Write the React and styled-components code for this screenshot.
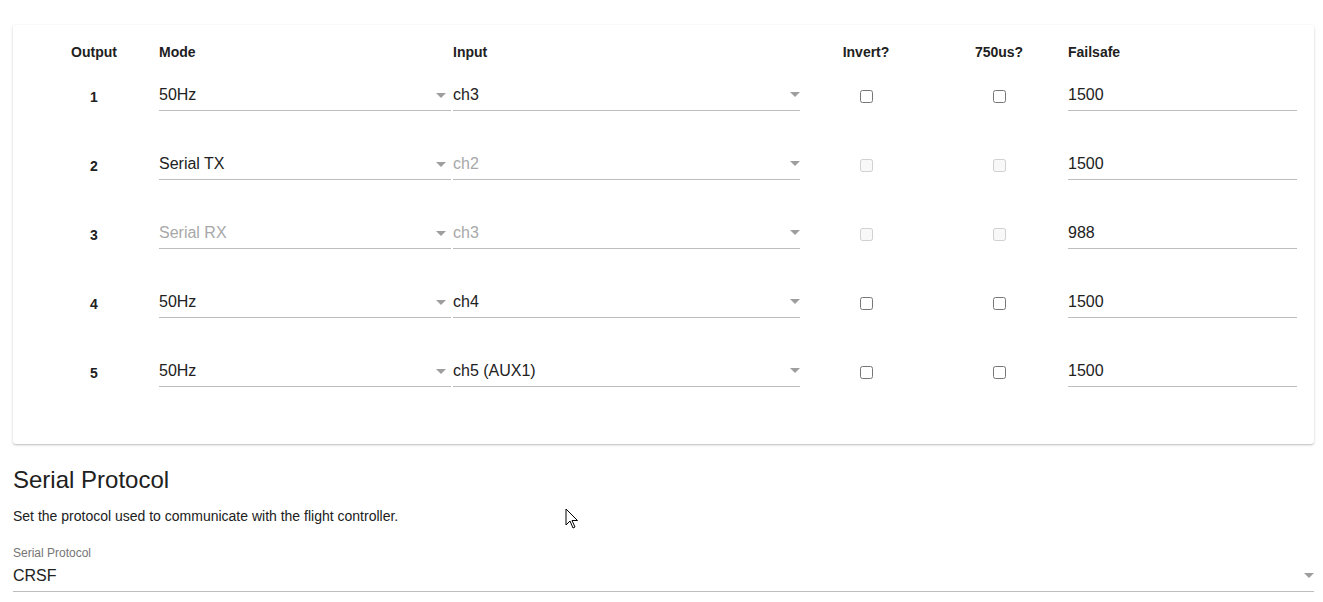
import React from 'react';
import styled, { createGlobalStyle } from 'styled-components';

const GlobalStyle = createGlobalStyle`
  body {
    margin: 0;
    background: #fff;
    font-family: 'Liberation Sans', Arial, sans-serif;
    color: #212121;
  }
`;

const Page = styled.div`
  position: relative;
  padding: 25px 9px 10px 13px;
`;

const Card = styled.div`
  background: #fff;
  border-radius: 3px;
  box-shadow: 0 1px 3px rgba(0, 0, 0, 0.18), 0 1px 1px rgba(0, 0, 0, 0.1);
  padding: 0 17px 37px 16px;
`;

const Grid = styled.div`
  display: grid;
  grid-template-columns: 130px 294px 347px 132px 134px 1fr;
  grid-template-rows: 37px repeat(5, 69px);
`;

const HeadCell = styled.div`
  font-size: 14px;
  font-weight: 700;
  line-height: 16px;
  padding-top: 19px;
  text-align: ${(p) => p.$align || 'left'};
  padding-left: ${(p) => p.$pad || 0}px;
`;

const Cell = styled.div`
  display: flex;
  align-items: center;
  justify-content: ${(p) => (p.$center ? 'center' : 'flex-start')};
  padding-left: ${(p) => p.$pad || 0}px;
`;

const RowNum = styled.span`
  font-size: 14px;
  font-weight: 700;
  margin-top: 1px;
`;

const SelectBox = styled.div`
  position: relative;
  width: ${(p) => p.$width}px;
  margin-bottom: 4px;
  padding: 7px 0 6px;
  font-size: 16px;
  line-height: 19px;
  border-bottom: 1px solid #bdbdbd;
  color: ${(p) => (p.$disabled ? '#a8a8a8' : '#212121')};
`;

const Arrow = styled.svg`
  position: absolute;
  right: ${(p) => p.$right}px;
  top: ${(p) => p.$top}px;
  width: 10px;
  height: 5px;
`;

const TextInput = styled.div`
  width: 229px;
  margin-bottom: 4px;
  padding: 7px 0 6px;
  font-size: 16px;
  line-height: 19px;
  border-bottom: 1px solid #bdbdbd;
  color: #212121;
`;

const Check = styled.input.attrs({ type: 'checkbox' })`
  width: 13px;
  height: 13px;
  margin: 0;
`;

const Section = styled.section`
  padding-top: 21px;
`;

const Title = styled.h2`
  margin: 0;
  font-size: 24px;
  font-weight: 400;
  line-height: 29px;
  color: #212121;
`;

const Desc = styled.p`
  margin: 12px 0 0;
  font-size: 14px;
  line-height: 20px;
  color: #212121;
`;

const FieldLabel = styled.div`
  margin-top: 20px;
  font-size: 12px;
  line-height: 14px;
  color: #757575;
`;

const WideSelect = styled.div`
  position: relative;
  margin-top: 6px;
  padding-bottom: 6px;
  font-size: 16px;
  line-height: 19px;
  border-bottom: 1px solid #bdbdbd;
  color: #212121;
`;

const Cursor = styled.svg`
  position: absolute;
  left: 565px;
  top: 508px;
  width: 14px;
  height: 21px;
`;

const Caret = ({ right, top = 15 }) => (
  <Arrow $right={right} $top={top} viewBox="0 0 10 5">
    <path d="M0 0h10L5 5z" fill="#9e9e9e" />
  </Arrow>
);

const rows = [
  { n: 1, mode: '50Hz', input: 'ch3', fs: '1500' },
  { n: 2, mode: 'Serial TX', input: 'ch2', fs: '1500', inputOff: true },
  { n: 3, mode: 'Serial RX', input: 'ch3', fs: '988', modeOff: true, inputOff: true },
  { n: 4, mode: '50Hz', input: 'ch4', fs: '1500' },
  { n: 5, mode: '50Hz', input: 'ch5 (AUX1)', fs: '1500' },
];

const App = () => (
  <Page>
    <GlobalStyle />
    <Card>
      <Grid>
        <HeadCell $align="center">Output</HeadCell>
        <HeadCell>Mode</HeadCell>
        <HeadCell>Input</HeadCell>
        <HeadCell $align="center">Invert?</HeadCell>
        <HeadCell $align="center">750us?</HeadCell>
        <HeadCell $pad={2}>Failsafe</HeadCell>
        {rows.map((r) => (
          <React.Fragment key={r.n}>
            <Cell $center>
              <RowNum>{r.n}</RowNum>
            </Cell>
            <Cell>
              <SelectBox $width={292} $disabled={r.modeOff}>
                {r.mode}
                <Caret right={5} />
              </SelectBox>
            </Cell>
            <Cell>
              <SelectBox $width={347} $disabled={r.inputOff}>
                {r.input}
                <Caret right={0} top={14} />
              </SelectBox>
            </Cell>
            <Cell $center>
              <Check disabled={r.inputOff} />
            </Cell>
            <Cell $center>
              <Check disabled={r.inputOff} />
            </Cell>
            <Cell $pad={2}>
              <TextInput>{r.fs}</TextInput>
            </Cell>
          </React.Fragment>
        ))}
      </Grid>
    </Card>
    <Section>
      <Title>Serial Protocol</Title>
      <Desc>Set the protocol used to communicate with the flight controller.</Desc>
      <FieldLabel>Serial Protocol</FieldLabel>
      <WideSelect>
        CRSF
        <Caret right={0} top={7} />
      </WideSelect>
    </Section>
    <Cursor viewBox="0 0 14 21">
      <path
        d="M1 1v16l4-4 3 7 2-1-3-6.5h5.5z"
        fill="#fff"
        stroke="#000"
        strokeWidth="1"
        strokeLinejoin="round"
      />
    </Cursor>
  </Page>
);

export default App;
